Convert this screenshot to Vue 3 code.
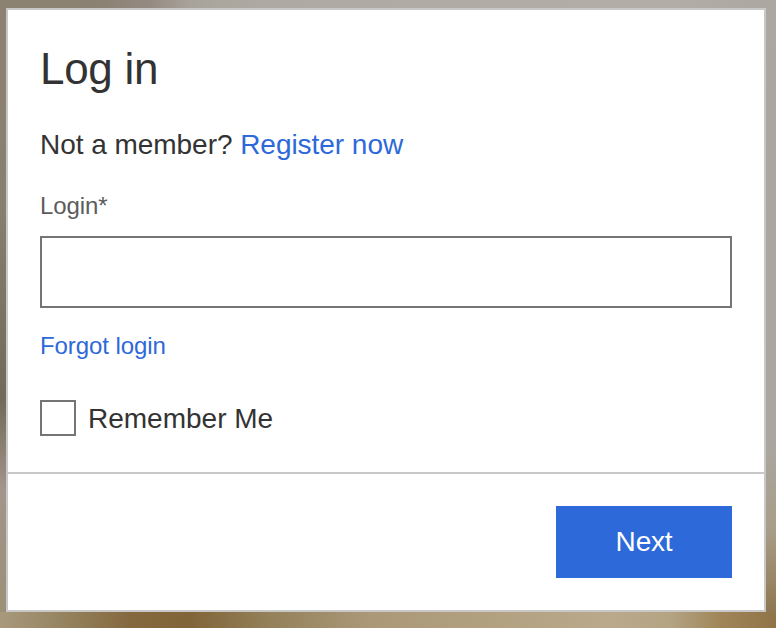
<script setup>
import { ref } from 'vue'
const login = ref('')
const remember = ref(false)
</script>

<template>
  <div class="page">
    <form class="card" @submit.prevent>
      <div class="body">
        <h1 class="title">Log in</h1>
        <p class="member">Not a member? <a class="link" href="#">Register now</a></p>
        <label class="label" for="login">Login*</label>
        <input id="login" v-model="login" class="input" type="text" />
        <a class="link forgot" href="#">Forgot login</a>
        <label class="remember">
          <input v-model="remember" class="check" type="checkbox" />
          <span class="remember-text">Remember Me</span>
        </label>
      </div>
      <div class="footer">
        <button class="next" type="submit">Next</button>
      </div>
    </form>
  </div>
</template>

<style scoped>
.page {
  box-sizing: border-box;
  width: 776px;
  height: 628px;
  padding: 8px 10px 16px 6px;
  font-family: "Liberation Sans", Arial, sans-serif;
  color: #333;
  background-color: #a89f8e;
  background-repeat: no-repeat;
  background-image:
    linear-gradient(to right, #8c8272 0, #8b8172 100px, #958a82 150px, #a8a39a 190px, #aeaaa3 260px, #b2aea7 660px, #aca8a1 776px),
    linear-gradient(to right, #a8997c 0, #9a8a68 45px, #84693e 130px, #806538 190px, #94805a 270px, #aa9878 370px, #baa98a 610px, #b4a484 670px, #a08558 720px, #8f7448 776px),
    linear-gradient(to bottom, #8c8272 0, #88806f 200px, #716a5a 400px, #a0968a 490px, #9c9078 612px),
    linear-gradient(to bottom, #aca8a1 0, #aaa59e 450px, #a89d88 530px, #8f7850 612px);
  background-size: 100% 8px, 100% 16px, 6px 100%, 10px 100%;
  background-position: top left, bottom left, top left, top right;
}
.card {
  box-sizing: border-box;
  height: 100%;
  display: flex;
  flex-direction: column;
  background: #fff;
  border: 2px solid #c8c8c8;
}
.body {
  flex: 1;
  display: flex;
  flex-direction: column;
  align-items: flex-start;
  padding: 0 32px;
  border-bottom: 2px solid #c8c8c8;
}
.title {
  margin: 34px 0 0;
  font-size: 44px;
  line-height: 50px;
  font-weight: 400;
  letter-spacing: -0.3px;
}
.member {
  margin: 35px 0 0;
  font-size: 28px;
  line-height: 32px;
  letter-spacing: -0.04px;
}
.link {
  color: #2d69d9;
  text-decoration: none;
}
.label {
  margin-top: 31px;
  font-size: 24px;
  line-height: 28px;
  color: #5c5c5c;
  letter-spacing: -0.1px;
}
.input {
  box-sizing: border-box;
  display: block;
  width: 100%;
  height: 72px;
  margin: 16px 0 0;
  padding: 0 12px;
  border: 2px solid #757575;
  border-radius: 0;
  background: #fff;
  font: inherit;
  outline: none;
}
.forgot {
  margin-top: 24px;
  font-size: 24px;
  line-height: 28px;
  letter-spacing: -0.08px;
}
.remember {
  display: flex;
  align-items: flex-start;
  gap: 12px;
  margin-top: 40px;
  font-size: 28px;
  line-height: 36px;
}
.remember-text {
  padding-top: 1px;
}
.check {
  appearance: none;
  box-sizing: border-box;
  width: 36px;
  height: 36px;
  margin: 0;
  border: 2px solid #757575;
  background: #fff;
}
.footer {
  display: flex;
  justify-content: flex-end;
  padding: 32px;
}
.next {
  width: 176px;
  height: 72px;
  border: 0;
  border-radius: 0;
  background: #2d69d9;
  color: #fff;
  font: inherit;
  font-size: 28px;
  letter-spacing: -0.2px;
}
</style>
